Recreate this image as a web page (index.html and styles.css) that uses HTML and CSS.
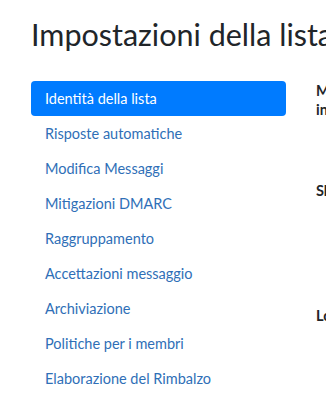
FILE: index.html
```html
<!DOCTYPE html>
<html lang="it">
<head>
  <meta charset="UTF-8">
  <title>Impostazioni della lista</title>
  <link rel="stylesheet" href="styles.css">
</head>
<body>
  <div class="container">
    <h1>Impostazioni della lista</h1>
    <div class="row">
      <div class="col-nav">
        <ul class="nav-pills">
          <li><a class="nav-link active" href="#">Identità della lista</a></li>
          <li><a class="nav-link" href="#">Risposte automatiche</a></li>
          <li><a class="nav-link" href="#">Modifica Messaggi</a></li>
          <li><a class="nav-link" href="#">Mitigazioni DMARC</a></li>
          <li><a class="nav-link" href="#">Raggruppamento</a></li>
          <li><a class="nav-link" href="#">Accettazioni messaggio</a></li>
          <li><a class="nav-link" href="#">Archiviazione</a></li>
          <li><a class="nav-link" href="#">Politiche per i membri</a></li>
          <li><a class="nav-link" href="#">Elaborazione del Rimbalzo</a></li>
        </ul>
      </div>
      <div class="col-form">
        <div class="field field-first">
          <label>Mostra la lista nell'elenco<br>indice delle liste</label>
        </div>
        <div class="field field-second">
          <label>Slug della lista</label>
        </div>
        <div class="field field-third">
          <label>Loghi della lista</label>
        </div>
      </div>
    </div>
  </div>
</body>
</html>
```

FILE: styles.css
```css
html, body {
  margin: 0;
  overflow: hidden;
}

body {
  font-family: Lato, 'Open Sans', sans-serif;
  font-size: 14.5px;
  color: #212529;
  background: white;
}

.container {
  padding: 0 16px;
  width: 600px;
}

h1 {
  font-size: 30.5px;
  font-weight: 400;
  line-height: 36px;
  margin: 16px 15px 29px;
  white-space: nowrap;
  width: fit-content;
}

.row {
  display: flex;
}

.col-nav {
  width: 255px;
  padding: 0 15px;
  flex-shrink: 0;
}

.nav-pills {
  list-style: none;
  margin: 0;
  padding: 0;
}

.nav-link {
  display: block;
  padding: 7px 14px;
  line-height: 21px;
  color: #2f6fb7;
  text-decoration: none;
  border-radius: 4px;
}

.nav-link.active {
  background-color: #007bff;
  color: white;
}

.col-form {
  padding: 0 15px;
  flex: 1;
}

.field label {
  font-weight: bold;
  white-space: nowrap;
  line-height: 19px;
  display: block;
}

.field-first {
  padding-top: 0;
}

.field-second {
  padding-top: 62px;
}

.field-third {
  padding-top: 106px;
}
```
